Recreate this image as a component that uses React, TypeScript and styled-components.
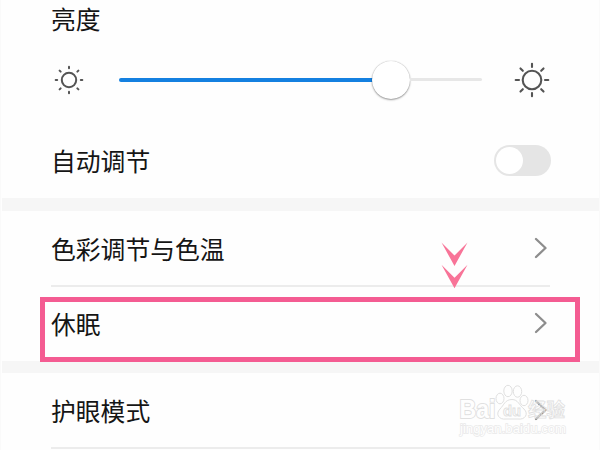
import React from "react";
import styled, { createGlobalStyle } from "styled-components";

const GlobalStyle = createGlobalStyle`
  * { box-sizing: border-box; }
  body { margin: 0; background: #fefefe; overflow: hidden; }
`;

const Screen = styled.main`
  position: relative;
  display: flex;
  flex-direction: column;
  width: 600px;
  height: 450px;
  overflow: hidden;
  padding: 0 1px 0 2px;
  background: #fefefe;
  box-shadow: inset 1px 0 #fafafa, inset -1px 0 #fafafa;
  color: #151515;
  font-family: "Noto Sans CJK SC", sans-serif;
  font-size: 24.8px;
  line-height: 36px;
`;

const Section = styled.section`
  flex: none;
  padding: 0 49px;
`;

const Band = styled.div<{ $height: number }>`
  flex: none;
  height: ${(p) => p.$height}px;
  background: #f6f6f6;
`;

const Title = styled.h1`
  height: 55px;
  margin: 0;
  font: inherit;
`;

const BrightnessRow = styled.div`
  display: flex;
  align-items: center;
  height: 49px;
`;

const IconSlot = styled.div<{ $width: number; $align: string }>`
  display: flex;
  flex: none;
  justify-content: ${(p) => p.$align};
  width: ${(p) => p.$width}px;
`;

const Track = styled.div`
  display: flex;
  align-items: center;
  flex: none;
  width: 363px;
  height: 38px;
`;

const Filled = styled.div`
  width: 254px;
  height: 4px;
  border-radius: 2px 0 0 2px;
  background: #1480e0;
`;

const Knob = styled.div`
  width: 38px;
  height: 38px;
  margin-left: -1px;
  border-radius: 50%;
  background: #fff;
  box-shadow: 0 0 1px rgba(0, 0, 0, 0.3), 0 1px 2px rgba(0, 0, 0, 0.38);
`;

const Remaining = styled.div`
  flex: 1;
  height: 3px;
  border-radius: 0 2px 2px 0;
  background: #e7e7e7;
`;

const Row = styled.div<{ $height: number; $top: number; $line?: boolean }>`
  display: flex;
  align-items: flex-start;
  justify-content: space-between;
  height: ${(p) => p.$height}px;
  padding-top: ${(p) => p.$top}px;
  border-bottom: ${(p) => (p.$line ? "2px solid #ececec" : "none")};
`;

const Switch = styled.div`
  width: 57px;
  height: 31px;
  margin: 3px -1px 0 0;
  padding: 2px;
  border-radius: 16px;
  background: #e5e5e5;
`;

const SwitchKnob = styled.div`
  width: 27px;
  height: 27px;
  border-radius: 50%;
  background: #fff;
`;

const ChevronIcon = styled.svg`
  width: 18px;
  height: 24px;
  margin-top: 6px;
`;

const Highlight = styled.div`
  position: absolute;
  left: 40px;
  top: 297px;
  width: 540px;
  height: 65px;
  border: 5px solid #f45c92;
`;

const Arrows = styled.svg`
  position: absolute;
  left: 441px;
  top: 242px;
`;

const Watermark = styled.svg`
  position: absolute;
  left: 455px;
  top: 380px;
`;

const rays = [0, 45, 90, 135, 180, 225, 270, 315];

function Sun({ size, radius, from, to, width }: {
  size: number; radius: number; from: number; to: number; width: number;
}) {
  const c = size / 2;
  return (
    <svg width={size} height={size} fill="none" stroke="#545454" strokeWidth={width} strokeLinecap="round">
      <circle cx={c} cy={c} r={radius} />
      {rays.map((a) => (
        <line key={a} x1={c} y1={c - from} x2={c} y2={c - to} transform={`rotate(${a} ${c} ${c})`} />
      ))}
    </svg>
  );
}

function Chevron() {
  return (
    <ChevronIcon viewBox="0 0 18 24" fill="none" stroke="#8d8d8d" strokeWidth="2.3" strokeLinecap="round" strokeLinejoin="round">
      <path d="M4 3L13.5 12L4 21" />
    </ChevronIcon>
  );
}

export default function App() {
  return (
    <>
      <GlobalStyle />
      <Screen>
        <Section>
          <Title>亮度</Title>
          <BrightnessRow>
            <IconSlot $width={68} $align="flex-start">
              <Sun size={36} radius={7.2} from={11.8} to={13.3} width={2} />
            </IconSlot>
            <Track>
              <Filled />
              <Knob />
              <Remaining />
            </Track>
            <IconSlot $width={69} $align="flex-end">
              <Sun size={38} radius={9.3} from={13} to={16.3} width={2.1} />
            </IconSlot>
          </BrightnessRow>
          <Row $height={94} $top={38}>
            自动调节
            <Switch><SwitchKnob /></Switch>
          </Row>
        </Section>
        <Band $height={13} />
        <Section>
          <Row $height={76} $top={19} $line>
            色彩调节与色温
            <Chevron />
          </Row>
          <Row $height={74} $top={18}>
            休眠
            <Chevron />
          </Row>
        </Section>
        <Band $height={12} />
        <Section>
          <Row $height={76} $top={19} $line>
            护眼模式
            <Chevron />
          </Row>
        </Section>
        <Highlight />
        <Arrows width="27" height="47" fill="#f87498">
          <path d="M.5 .5L13.5 13.5L26.5 .5L13.5 24Z" />
          <path d="M.5 22.8L13.5 35.8L26.5 22.8L13.5 46.2Z" />
        </Arrows>
        <Watermark width="120" height="62" fill="#fefefe" stroke="#e0e0e0" strokeWidth="1" fontFamily="'Liberation Sans', 'Noto Sans CJK SC', sans-serif">
          <g fontWeight="700" paintOrder="stroke" strokeWidth="1.8">
            <text x="4.5" y="38" fontSize="25" textLength="36" lengthAdjust="spacingAndGlyphs">Bai</text>
            <text x="73" y="36.5" fontSize="19" textLength="37" lengthAdjust="spacingAndGlyphs" paintOrder="normal" fillOpacity="0.35" strokeWidth="0.8" fontFamily="'Noto Sans CJK SC', sans-serif">经验</text>
            <text x="5" y="53" fontSize="12.5" textLength="106" lengthAdjust="spacingAndGlyphs" fontWeight="400" stroke="#e9e9e9" strokeWidth="1.4">jingyan.baidu.com</text>
          </g>
          <ellipse cx="45" cy="18.5" rx="4" ry="5.3" />
          <ellipse cx="53" cy="11" rx="4.2" ry="5.7" />
          <ellipse cx="62.5" cy="11.5" rx="4.2" ry="5.7" />
          <ellipse cx="69" cy="20.5" rx="4" ry="5.2" />
          <path d="M57 19.5C50 19.5 49 25 45 29C40 34 44 40 51 39H63C70 40 74 34 69 29C64 25 63 19.5 57 19.5Z" />
          <text x="48" y="36" fontSize="15" fontWeight="700" textLength="18" lengthAdjust="spacingAndGlyphs" strokeWidth="0.9">du</text>
        </Watermark>
      </Screen>
    </>
  );
}
